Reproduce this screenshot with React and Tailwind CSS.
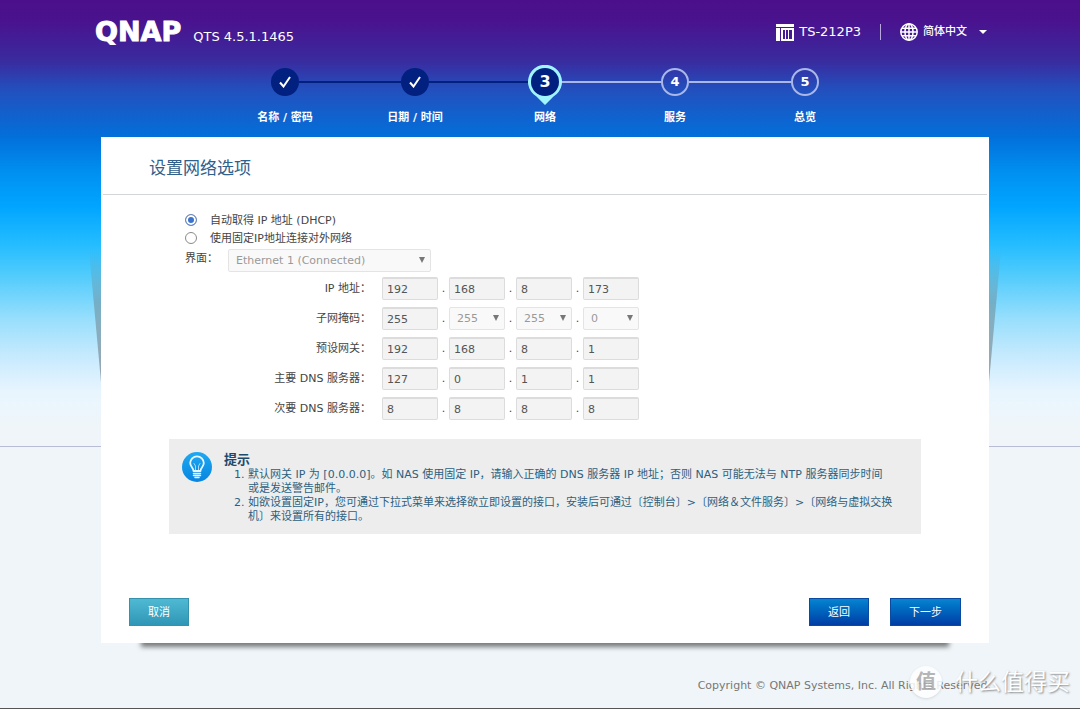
import React from 'react';
import clsx from 'clsx';

const STEPS = [
  { label: '名称 / 密码', state: 'done' },
  { label: '日期 / 时间', state: 'done' },
  { label: '网络', state: 'active' },
  { label: '服务', state: 'todo' },
  { label: '总览', state: 'todo' },
];

const ADDRESS_ROWS = [
  { id: 'ip', label: 'IP 地址：', values: ['192', '168', '8', '173'] },
  { id: 'mask', label: '子网掩码：', values: ['255', '255', '255', '0'], selectFrom: 1 },
  { id: 'gateway', label: '预设网关：', values: ['192', '168', '8', '1'] },
  { id: 'dns1', label: '主要 DNS 服务器：', values: ['127', '0', '1', '1'] },
  { id: 'dns2', label: '次要 DNS 服务器：', values: ['8', '8', '8', '8'] },
];

function NasIcon() {
  return (
    <svg className="h-[17px] w-[18px]" viewBox="0 0 18 17" fill="#fff" aria-hidden="true">
      <rect x="0" y="0" width="18" height="3" />
      <rect x="0" y="4" width="4" height="13" />
      <path d="M5 4h13v13H5zM7 6v9h2V6zM10 6v9h2V6zM13 6v9h3V6z" fillRule="evenodd" />
    </svg>
  );
}

function GlobeIcon() {
  return (
    <svg className="h-[18px] w-[18px]" viewBox="0 0 18 18" fill="none" stroke="#fff" strokeWidth="1.5" aria-hidden="true">
      <circle cx="9" cy="9" r="8.2" />
      <ellipse cx="9" cy="9" rx="4" ry="8.2" />
      <path d="M9 1v16M1 9h16M2 5.2h14M2 12.8h14" />
    </svg>
  );
}

function BulbIcon() {
  return (
    <svg className="h-[30px] w-[30px] shrink-0" viewBox="0 0 30 30" aria-hidden="true">
      <defs>
        <linearGradient id="bulb" x1="0" y1="0" x2="0" y2="1">
          <stop offset="0" stopColor="#1fa9f2" />
          <stop offset="1" stopColor="#0785e0" />
        </linearGradient>
      </defs>
      <circle cx="15" cy="15" r="15" fill="url(#bulb)" />
      <g fill="none" stroke="#e6f8ff" strokeLinecap="round">
        <path d="M11.500 19c0-3.200-3.300-4.300-3.300-7.900a6.800 6.800 0 0 1 13.600 0c0 3.600-3.300 4.700-3.300 7.900z" strokeWidth="1.800" strokeLinejoin="round" />
        <path d="M13.500 18.500v-4.500l-1.500-2.500M16.500 18.500v-4.500l1.500-2.500" strokeWidth="0.700" />
        <path d="M11.500 21.500h7M11.500 23.500h7M13 25.500h4" strokeWidth="1.500" />
      </g>
    </svg>
  );
}

function StepMarker({ state, number }) {
  if (state === 'done') {
    return (
      <span className="flex h-7 w-7 shrink-0 items-center justify-center rounded-full bg-[#02207f]">
        <svg className="h-3 w-3" viewBox="0 0 12 12" fill="none" stroke="#fff" strokeWidth="2" aria-hidden="true">
          <path d="M1 6.500l3.500 4L11 1" />
        </svg>
      </span>
    );
  }

  if (state === 'active') {
    return (
      <span className="relative flex h-[34px] w-[34px] shrink-0 items-center justify-center text-base font-bold">
        <svg className="absolute left-0 top-0 h-10 w-[34px]" viewBox="0 0 34 40" aria-hidden="true">
          <path d="M17 40L8.500 31.500A17 17 0 1 1 25.500 31.500z" fill="#a0f4ff" />
          <circle cx="17" cy="17" r="14" fill="#02207f" />
        </svg>
        <span className="relative">{number}</span>
      </span>
    );
  }

  return (
    <span className="flex h-7 w-7 shrink-0 items-center justify-center rounded-full border-2 border-[#a9b8e8] text-[13px] font-bold">
      {number}
    </span>
  );
}

function StepLine({ state }) {
  return (
    <span
      className={clsx(
        'h-[2px] flex-1',
        state === 'done' && 'bg-[#02207f]',
        state === 'todo' && 'bg-[#a9b8e8]'
      )}
    />
  );
}

function Stepper() {
  return (
    <ol className="mx-auto grid w-full max-w-[650px] grid-cols-5">
      {STEPS.map((step, index) => (
        <li key={step.label} className="flex flex-col items-center">
          <div className="flex h-[34px] w-full items-center">
            <StepLine state={index === 0 ? 'none' : step.state === 'todo' ? 'todo' : 'done'} />
            <StepMarker state={step.state} number={index + 1} />
            <StepLine state={index === STEPS.length - 1 ? 'none' : step.state === 'done' ? 'done' : 'todo'} />
          </div>
          <span className="mt-[10px] text-[11px] font-bold leading-[18px]">{step.label}</span>
        </li>
      ))}
    </ol>
  );
}

function DisabledSelect({ className, ...props }) {
  return (
    <span className={clsx('relative block', className)}>
      <select
        disabled
        className="block h-[23px] w-full appearance-none rounded-[2px] border border-[#e4e4e4] bg-[#f9f9f9] pl-[7px] pt-[2px] text-[#999] opacity-100"
        {...props}
      />
      <svg className="pointer-events-none absolute right-[6px] top-2 h-[6px] w-[6px]" viewBox="0 0 6 6" fill="#777" aria-hidden="true">
        <path d="M0 0h6L3 6z" />
      </svg>
    </span>
  );
}

function AddressRow({ row }) {
  return (
    <div className="flex items-center">
      <label htmlFor={`${row.id}-0`} className="w-[186px] pt-[2px] text-right">
        {row.label}
      </label>
      <div className="ml-[11px] flex items-center">
        {row.values.map((value, index) => (
          <React.Fragment key={index}>
            {index > 0 && <span className="w-[11px] pt-[2px] text-center">.</span>}
            {row.selectFrom && index >= row.selectFrom ? (
              <DisabledSelect className="w-14" id={`${row.id}-${index}`} aria-label={`${row.label}${index + 1}`}>
                <option>{value}</option>
              </DisabledSelect>
            ) : (
              <input
                id={`${row.id}-${index}`}
                aria-label={index > 0 ? `${row.label}${index + 1}` : undefined}
                defaultValue={value}
                disabled
                className="block h-[23px] w-14 rounded-[2px] border border-t-2 border-[#dcdcdc] bg-[#f3f3f3] px-1 text-[#555]"
              />
            )}
          </React.Fragment>
        ))}
      </div>
    </div>
  );
}

function ModeOption({ children, ...props }) {
  return (
    <label className="flex h-[18px] items-center gap-[13px]">
      <input
        type="radio"
        name="mode"
        className="h-3 w-3 appearance-none rounded-full border border-[#8a8a8a] bg-white checked:border-[#6f87b5] checked:bg-[#3a74cc] checked:shadow-[inset_0_0_0_2px_#fff]"
        {...props}
      />
      <span className="pt-[2px]">{children}</span>
    </label>
  );
}

function SideShadow({ className }) {
  return (
    <svg className={clsx('absolute top-[113px] h-[132px] w-3', className)} viewBox="0 0 12 132" aria-hidden="true">
      <defs>
        <linearGradient id="side" x1="0" y1="0" x2="0" y2="1">
          <stop offset="0" stopColor="#6b8590" stopOpacity="0" />
          <stop offset="0.4" stopColor="#6b8590" stopOpacity="0.5" />
          <stop offset="1" stopColor="#7a868c" stopOpacity="0.7" />
        </linearGradient>
      </defs>
      <path d="M0 0h12v132z" fill="url(#side)" />
    </svg>
  );
}

export default function App() {
  return (
    <div className="relative flex min-h-screen flex-col overflow-hidden border-b border-[#555] bg-[linear-gradient(to_bottom,#4b0f8b_0px,#4a128e_20px,#3a2a9e_60px,#2250be_90px,#0270da_137px,#0092f2_175px,#00a4ff_205px,#25bdff_245px,#4ccafc_272px,#99dffc_320px,#cbebfe_360px,#e8f5fe_392px,#eff6fa_425px,#eff5f9_446px,#b8bcd4_446px,#b8bcd4_447px,#eff5f9_447px)] pl-[10px] font-['DejaVu_Sans','Noto_Sans_CJK_SC',sans-serif] text-[11px] text-[#444]">
      <div className="mx-auto w-full max-w-[900px]">
        <header className="text-white">
          <div className="flex h-[65px] items-start justify-between pt-5">
            <div className="flex items-baseline gap-3">
              <span className="text-[27px] font-bold leading-6 [-webkit-text-stroke:1px_#fff]">QNAP</span>
              <span className="text-[13px]">QTS 4.5.1.1465</span>
            </div>
            <div className="flex h-6 items-center pr-2">
              <NasIcon />
              <span className="ml-[5px] text-[13px]">TS-212P3</span>
              <span className="mx-[19px] h-4 w-px bg-[#b9a8dd]" />
              <button type="button" className="flex items-center text-[11px] font-medium">
                <GlobeIcon />
                <span className="ml-[5px]">简体中文</span>
                <svg className="ml-3 h-1 w-2" viewBox="0 0 8 4" fill="#fff" aria-hidden="true">
                  <path d="M0 0h8L4 4z" />
                </svg>
              </button>
            </div>
          </div>
          <Stepper />
        </header>

        <main className="relative mx-[6px] mt-[10px]">
          <SideShadow className="-left-3" />
          <SideShadow className="-right-3 -scale-x-100" />
          <div className="absolute inset-x-10 bottom-0 h-4 shadow-[0_4px_5px_rgba(0,0,0,0.5)]" />

          <form className="relative bg-white pb-[17px]" onSubmit={(event) => event.preventDefault()}>
            <h1 className="mx-[2px] border-b border-[#d3d6d8] px-[46px] pb-3 pt-[17px] text-[17px] leading-7 text-[#2f618a]">
              设置网络选项
            </h1>

            <div className="px-[84px] pt-4">
              <ModeOption defaultChecked>自动取得 IP 地址 (DHCP)</ModeOption>
              <ModeOption>使用固定IP地址连接对外网络</ModeOption>

              <div className="mt-[2px] flex">
                <label htmlFor="interface" className="w-[43px] pt-[2px]">界面：</label>
                <DisabledSelect className="w-[203px]" id="interface">
                  <option>Ethernet 1 (Connected)</option>
                </DisabledSelect>
              </div>

              <div className="mt-[5px] flex flex-col gap-[7px]">
                {ADDRESS_ROWS.map((row) => (
                  <AddressRow key={row.id} row={row} />
                ))}
              </div>
            </div>

            <section className="mx-[68px] mt-[19px] flex h-[95px] gap-3 bg-[#ededed] pl-[13px] pr-4 pt-[13px] text-[#2c5f7f]">
              <BulbIcon />
              <div className="min-w-0 flex-1">
                <h2 className="text-[13px] font-bold leading-4 text-[#1c4a6d]">提示</h2>
                <ol className="list-decimal pl-6 leading-[14px]">
                  <li>
                    默认网关 IP 为 [0.0.0.0]。如 NAS 使用固定 IP，请输入正确的 DNS 服务器 IP 地址；否则 NAS 可能无法与 NTP 服务器同步时间
                    <br />
                    或是发送警告邮件。
                  </li>
                  <li>
                    如欲设置固定IP，您可通过下拉式菜单来选择欲立即设置的接口，安装后可通过〔控制台〕&gt;〔网络＆文件服务〕&gt;〔网络与虚拟交换
                    <br />
                    机〕来设置所有的接口。
                  </li>
                </ol>
              </div>
            </section>

            <div className="mx-7 mt-16 flex items-center gap-[21px] text-white">
              <button type="button" className="mr-auto h-7 border border-[#3592ac] bg-linear-to-b from-[#4fb9d3] to-[#2f97b6] px-[18px] pt-[2px]">
                取消
              </button>
              <button type="button" className="h-7 border border-[#0a4aa0] bg-linear-to-b from-[#0a84d0] to-[#003da6] px-[18px] pt-[2px]">
                返回
              </button>
              <button type="submit" className="h-7 border border-[#0a4aa0] bg-linear-to-b from-[#0a84d0] to-[#003da6] px-[18px] pt-[2px]">
                下一步
              </button>
            </div>
          </form>
        </main>

        <footer className="mt-[33px] pr-1 text-right leading-5 text-[#777]">
          Copyright © QNAP Systems, Inc. All Rights Reserved.
        </footer>
      </div>

      <div className="absolute bottom-[10px] right-[10px] flex items-center gap-[13px] text-[23px] leading-8 text-white opacity-85 [text-shadow:1px_1px_2px_#777]">
        <span className="flex h-8 w-8 items-center justify-center rounded-full bg-white text-xl font-bold text-[#aaa] shadow [text-shadow:none]">值</span>
        <span>什么值得买</span>
      </div>
    </div>
  );
}
